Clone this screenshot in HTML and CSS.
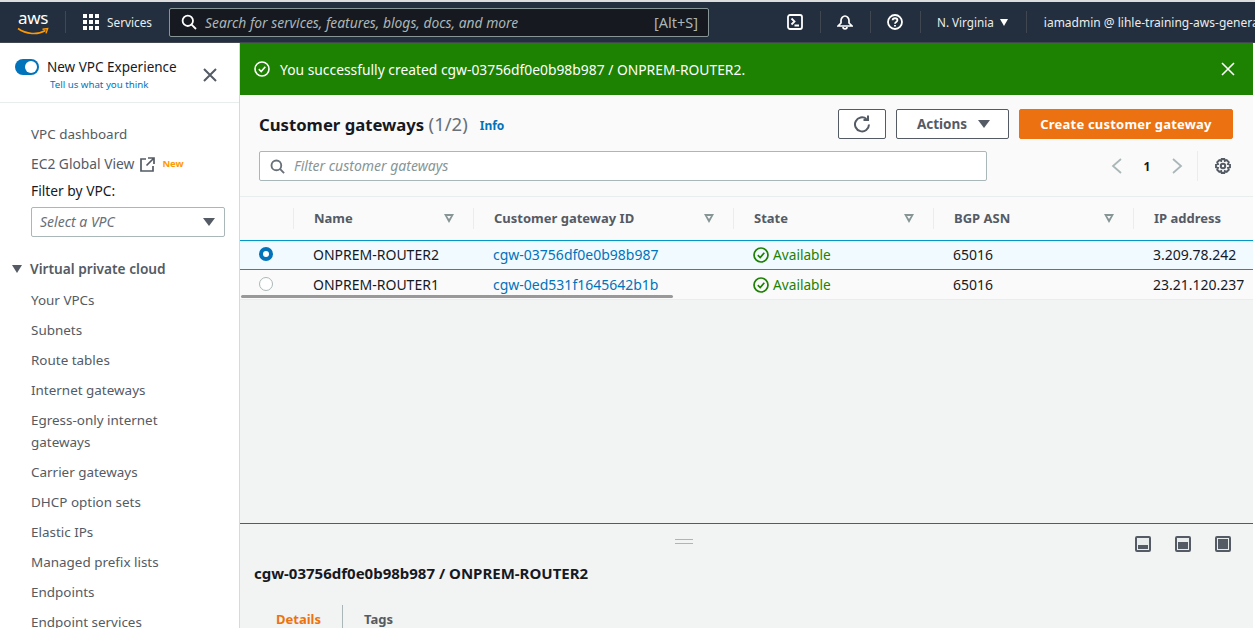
FILE: index.html
```html
<!DOCTYPE html>
<html lang="en">
<head>
    <meta charset="UTF-8">
    <title>Customer gateways | VPC Console</title>
    <link rel="stylesheet" href="styles.css">
</head>
<body>

    <header class="topbar">
        <div class="logo">
            <span class="logo-text">aws</span>
            <svg class="logo-smile" width="32" height="9" viewBox="0 0 32 9"><path d="M1 1.500C9 7.500 21 8 28.500 3.500" fill="none" stroke="#f90" stroke-width="1.600"/><path d="M25.500 2.200L30.600 1.600 29 6.400" fill="none" stroke="#f90" stroke-width="1.400"/></svg>
        </div>
        <span class="top-sep sep-logo"></span>
        <svg class="grid-icon" width="16" height="16" viewBox="0 0 16 16" fill="#fff"><rect width="4" height="4"/><rect x="6" width="4" height="4"/><rect x="12" width="4" height="4"/><rect y="6" width="4" height="4"/><rect x="6" y="6" width="4" height="4"/><rect x="12" y="6" width="4" height="4"/><rect y="12" width="4" height="4"/><rect x="6" y="12" width="4" height="4"/><rect x="12" y="12" width="4" height="4"/></svg>
        <span class="services">Services</span>
        <div class="search">
            <svg width="16" height="16" viewBox="0 0 16 16" fill="none" stroke="#fff" stroke-width="1.800"><circle cx="6.800" cy="6.800" r="5.200"/><path d="M10.600 10.600L15 15"/></svg>
            <span class="search-text">Search for services, features, blogs, docs, and more</span>
            <span class="search-key">[Alt+S]</span>
        </div>
        <svg class="top-icon icon-shell" width="16" height="16" viewBox="0 0 16 16" fill="none" stroke="#fff" stroke-width="1.800"><rect x="1" y="1" width="14" height="14" rx="2"/><path d="M4.500 4.500L7.500 7.500 4.500 10.500M7.500 11.500H12"/></svg>
        <span class="top-sep"></span>
        <svg class="top-icon" width="16" height="16" viewBox="0 0 16 16" fill="none" stroke="#fff" stroke-width="1.700"><path d="M1 12L4 9V6.500C4 4 6 2 8 2S12 4 12 6.500V9L15 12Z"/><path d="M6 13C6 15.500 10 15.500 10 13"/></svg>
        <span class="top-sep"></span>
        <svg class="top-icon" width="16" height="16" viewBox="0 0 16 16" fill="none" stroke="#fff" stroke-width="1.800"><circle cx="8" cy="8" r="7"/><path d="M5.600 6.200C5.800 3.600 10.400 3.600 10.400 6.200 10.400 8 8 7.800 8 9.800"/><path d="M8 11V12.600"/></svg>
        <span class="top-sep"></span>
        <span class="region">N. Virginia</span>
        <span class="caret caret-white"></span>
        <span class="top-sep"></span>
        <span class="account">iamadmin @ lihle-training-aws-general</span>
    </header>

    <div class="layout">
        <nav class="sidebar">
            <div class="side-head">
                <div class="toggle-row">
                    <span class="toggle"></span>
                    <span class="toggle-label">New VPC Experience</span>
                </div>
                <a class="feedback">Tell us what you think</a>
                <svg class="side-close" width="14" height="14" viewBox="0 0 14 14" stroke="#545b64" stroke-width="2"><path d="M1 1L13 13M13 1L1 13"/></svg>
            </div>
            <div class="side-body">
                <a class="nav-link first-link">VPC dashboard</a>
                <div class="nav-link ec2-row">
                    <span>EC2 Global View</span>
                    <svg width="15" height="15" viewBox="0 0 15 15" fill="none" stroke="#545b64" stroke-width="1.700"><path d="M6 2H1V14H13V9"/><path d="M8 1H14V7M14 1L6.500 8.500"/></svg>
                    <span class="new-tag">New</span>
                </div>
                <label class="filter-label">Filter by VPC:</label>
                <div class="vpc-select">
                    <span>Select a VPC</span>
                    <span class="caret caret-dark"></span>
                </div>
                <div class="nav-group"><span class="caret caret-dark"></span>Virtual private cloud</div>
                <a class="nav-link">Your VPCs</a>
                <a class="nav-link">Subnets</a>
                <a class="nav-link">Route tables</a>
                <a class="nav-link">Internet gateways</a>
                <a class="nav-link nav-wrap">Egress-only internet gateways</a>
                <a class="nav-link">Carrier gateways</a>
                <a class="nav-link">DHCP option sets</a>
                <a class="nav-link">Elastic IPs</a>
                <a class="nav-link">Managed prefix lists</a>
                <a class="nav-link">Endpoints</a>
                <a class="nav-link">Endpoint services</a>
            </div>
        </nav>

        <main class="content">
            <div class="flash">
                <svg width="16" height="16" viewBox="0 0 16 16" fill="none" stroke="#fff" stroke-width="1.600"><circle cx="8" cy="8" r="7"/><path d="M4.800 8.200L7.200 10.500 11.300 5.800"/></svg>
                <span class="flash-text">You successfully created cgw-03756df0e0b98b987 / ONPREM-ROUTER2.</span>
                <svg class="flash-close" width="14" height="14" viewBox="0 0 14 14" stroke="#fff" stroke-width="1.600"><path d="M1 1L13 13M13 1L1 13"/></svg>
            </div>

            <section class="panel">
                <div class="panel-head">
                    <h1>Customer gateways <span class="count">(1/2)</span></h1>
                    <a class="info">Info</a>
                    <div class="actions">
                        <button class="btn btn-refresh">
                            <svg width="18" height="18" viewBox="0 0 18 18" fill="none" stroke="#545b64" stroke-width="2"><path d="M16 9.500A7 7 0 1 1 13.500 4"/><path d="M15 0.500V5H10.500"/></svg>
                        </button>
                        <button class="btn btn-actions">Actions <span class="caret caret-dark"></span></button>
                        <button class="btn btn-primary">Create customer gateway</button>
                    </div>
                </div>
                <div class="filter-row">
                    <div class="filter-box">
                        <svg width="15" height="15" viewBox="0 0 16 16" fill="none" stroke="#687078" stroke-width="2"><circle cx="6.800" cy="6.800" r="5.200"/><path d="M10.600 10.600L15 15"/></svg>
                        <span>Filter customer gateways</span>
                    </div>
                    <div class="pager">
                        <svg width="12" height="16" viewBox="0 0 12 16" fill="none" stroke="#aab7b8" stroke-width="1.800"><path d="M10 1L2 8 10 15"/></svg>
                        <span class="page-num">1</span>
                        <svg width="12" height="16" viewBox="0 0 12 16" fill="none" stroke="#aab7b8" stroke-width="1.800"><path d="M2 1L10 8 2 15"/></svg>
                    </div>
                    <span class="pager-sep"></span>
                    <svg class="gear" width="16" height="16" viewBox="0 0 16 16" fill="none" stroke="#545b64" stroke-width="2"><circle cx="8" cy="8" r="2.200"/><path d="M6.700 1H9.300L9.800 3 11.700 2.200 13.800 4.300 13 6.200 15 6.700V9.300L13 9.800 13.800 11.700 11.700 13.800 9.800 13 9.300 15H6.700L6.200 13 4.300 13.800 2.200 11.700 3 9.800 1 9.300V6.700L3 6.200 2.200 4.300 4.300 2.200 6.200 3Z" stroke-width="1.900"/></svg>
                </div>

                <div class="table">
                    <div class="thead">
                        <div class="th th-select"></div>
                        <div class="th">Name<span class="sort"></span></div>
                        <div class="th">Customer gateway ID<span class="sort"></span></div>
                        <div class="th">State<span class="sort"></span></div>
                        <div class="th">BGP ASN<span class="sort"></span></div>
                        <div class="th">IP address</div>
                    </div>
                    <div class="row row-selected">
                        <div class="td td-select"><span class="radio radio-on"></span></div>
                        <div class="td">ONPREM-ROUTER2</div>
                        <div class="td"><a class="link">cgw-03756df0e0b98b987</a></div>
                        <div class="td state">
                            <svg width="16" height="16" viewBox="0 0 16 16" fill="none" stroke="#1d8102" stroke-width="1.700"><circle cx="8" cy="8" r="7"/><path d="M4.800 8.200L7.200 10.500 11.300 5.800"/></svg>
                            Available
                        </div>
                        <div class="td">65016</div>
                        <div class="td">3.209.78.242</div>
                    </div>
                    <div class="row">
                        <div class="td td-select"><span class="radio"></span></div>
                        <div class="td">ONPREM-ROUTER1</div>
                        <div class="td"><a class="link">cgw-0ed531f1645642b1b</a></div>
                        <div class="td state">
                            <svg width="16" height="16" viewBox="0 0 16 16" fill="none" stroke="#1d8102" stroke-width="1.700"><circle cx="8" cy="8" r="7"/><path d="M4.800 8.200L7.200 10.500 11.300 5.800"/></svg>
                            Available
                        </div>
                        <div class="td">65016</div>
                        <div class="td">23.21.120.237</div>
                    </div>
                    <span class="scrollbar"></span>
                </div>
            </section>

            <div class="spacer"></div>

            <section class="split">
                <div class="split-top">
                    <span class="handle"></span>
                    <div class="split-icons">
                        <span class="pane-icon pane-low"><i></i></span>
                        <span class="pane-icon pane-mid"><i></i></span>
                        <span class="pane-icon pane-full"><i></i></span>
                    </div>
                </div>
                <h2>cgw-03756df0e0b98b987 / ONPREM-ROUTER2</h2>
                <div class="tabs">
                    <span class="tab tab-active">Details</span>
                    <span class="tab">Tags</span>
                </div>
            </section>
        </main>
    </div>

</body>
</html>
```

FILE: styles.css
```css
* {
    box-sizing: border-box;
}
html, body {
    margin: 0;
    height: 628px;
    overflow: hidden;
}
body {
    font-family: "Noto Sans", sans-serif;
    font-size: 14px;
    color: #16191f;
    padding-top: 2px;
    background-color: #ddd;
}

/* top bar */
.topbar {
    height: 41px;
    background: #232f3e;
    color: #eaeded;
    display: flex;
    align-items: center;
    white-space: nowrap;
    overflow: hidden;
    border-bottom: 1px solid #414750;
}
.logo {
    width: 32px;
    margin-left: 17px;
    position: relative;
    height: 28px;
    flex: none;
}
.logo-text {
    display: block;
    font-size: 17px;
    line-height: 20px;
    color: #fff;
    text-align: center;
    letter-spacing: -0.3px;
}
.logo-smile {
    position: absolute;
    left: 0;
    top: 19px;
}
.top-sep {
    width: 1px;
    height: 22px;
    background: #414750;
    flex: none;
}
.sep-logo {
    margin-left: 16px;
}
.grid-icon {
    margin-left: 17px;
    flex: none;
}
.services {
    margin-left: 8px;
    font-size: 11.800px;
}
.search {
    margin-left: 17px;
    width: 540px;
    height: 29px;
    background: #16191f;
    border: 1px solid #879596;
    border-radius: 2px;
    display: flex;
    align-items: center;
    padding: 0 10px 0 11px;
    flex: none;
}
.search-text {
    margin-left: 8px;
    font-style: italic;
    color: #aab7b8;
    font-size: 13.850px;
    flex: 1;
}
.search-key {
    color: #aab7b8;
    font-size: 14.500px;
}
.top-icon {
    flex: none;
    margin: 0 17px 0 16px;
}
.icon-shell {
    margin-left: 78px;
    margin-right: 17px;
}
.region {
    margin-left: 16px;
    margin-right: 6px;
    font-size: 11.700px;
}
.account {
    margin-left: 17px;
    font-size: 12px;
}
.caret {
    display: inline-block;
    width: 0;
    height: 0;
    border-left: 5px solid transparent;
    border-right: 5px solid transparent;
    border-top: 8px solid #fff;
    flex: none;
}
.caret-white {
    margin-right: 18px;
    border-left-width: 4.500px;
    border-right-width: 4.500px;
    border-top-width: 7px;
}
.caret-dark {
    border-top-color: #545b64;
    border-left-width: 6px;
    border-right-width: 6px;
}

.layout {
    display: flex;
    height: 585px;
    background: #fff;
    padding-right: 2px;
}

/* left nav */
.sidebar {
    width: 240px;
    flex: none;
    background: #fff;
    border-right: 1px solid #d5dbdb;
    overflow: hidden;
}
.side-head {
    height: 60px;
    padding: 15px 0 0 15px;
    border-bottom: 1px solid #eaeded;
    position: relative;
}
.toggle-row {
    display: flex;
    align-items: center;
    height: 18px;
}
.toggle {
    width: 24px;
    height: 16px;
    border-radius: 8px;
    background: #0073bb;
    position: relative;
    flex: none;
}
.toggle::after {
    content: "";
    position: absolute;
    right: 2px;
    top: 2px;
    width: 12px;
    height: 12px;
    border-radius: 50%;
    background: #fff;
}
.toggle-label {
    margin-left: 8px;
    font-size: 13.500px;
}
.feedback {
    display: block;
    margin: 2px 0 0 35px;
    font-size: 9.700px;
    color: #0073bb;
}
.side-close {
    position: absolute;
    left: 203px;
    top: 25px;
}
.side-body {
    padding: 17px 14px 0 31px;
}
.nav-link {
    display: block;
    color: #545b64;
    font-size: 13.450px;
    line-height: 18px;
    margin-bottom: 12px;
}
.first-link {
    margin-top: 5px;
}
.ec2-row {
    display: flex;
    align-items: center;
    font-size: 13.800px;
    margin-bottom: 9px;
}
.ec2-row svg {
    margin-left: 6px;
}
.new-tag {
    margin-left: 7px;
    font-size: 9.500px;
    font-weight: 700;
    color: #ff9900;
}
.filter-label {
    display: block;
    font-size: 13.800px;
    line-height: 18px;
    margin-bottom: 7px;
}
.vpc-select {
    height: 30px;
    width: 194px;
    border: 1px solid #aab7b8;
    border-radius: 2px;
    display: flex;
    align-items: center;
    justify-content: space-between;
    padding: 0 9px 0 8px;
    font-style: italic;
    color: #687078;
}
.vpc-select span:first-child {
    margin-bottom: 1px;
}
.nav-group {
    margin: 23px 0 13px -19px;
    display: flex;
    align-items: center;
    font-size: 13.700px;
    font-weight: 600;
    color: #545b64;
    line-height: 18px;
}
.nav-group .caret {
    margin-right: 8px;
    border-left-width: 5px;
    border-right-width: 5px;
}
.nav-wrap {
    line-height: 22px;
    margin-top: -2px;
    margin-bottom: 10px;
    max-width: 150px;
}

/* main column */
.content {
    flex: 1;
    min-width: 0;
    background: #f2f3f3;
    display: flex;
    flex-direction: column;
    overflow: hidden;
}
.flash {
    height: 52px;
    flex: none;
    background: #1d8102;
    color: #fff;
    display: flex;
    align-items: center;
    padding: 0 18px 0 14px;
}
.flash-text {
    margin-left: 10px;
    flex: 1;
    font-size: 13.850px;
}
.panel {
    flex: none;
    background: #fafafa;
}
.panel-head {
    display: flex;
    align-items: center;
    padding: 14px 20px 0 19px;
    height: 44px;
}
h1 {
    margin: 0;
    font-size: 16.700px;
    font-weight: 700;
    line-height: 30px;
}
.count {
    font-size: 18.500px;
    font-weight: 400;
    color: #687078;
}
.info {
    margin: 3px 0 0 12px;
    font-size: 12px;
    font-weight: 700;
    color: #0073bb;
}
.actions {
    margin-left: auto;
    display: flex;
    gap: 10px;
}
.btn {
    height: 30px;
    border-radius: 2px;
    border: 1px solid #545b64;
    background: #fff;
    font-family: inherit;
    font-size: 13.500px;
    font-weight: 700;
    color: #545b64;
    display: flex;
    align-items: center;
    justify-content: center;
}
.btn-refresh {
    width: 48px;
}
.btn-actions {
    width: 113px;
    gap: 11px;
    padding-left: 8px;
}
.btn-primary {
    width: 214px;
    background: #ec7211;
    border-color: #ec7211;
    color: #fff;
    font-size: 13px;
    letter-spacing: 0.2px;
}
.filter-row {
    display: flex;
    align-items: center;
    padding: 12px 0 0 19px;
    height: 42px;
}
.filter-box {
    width: 728px;
    height: 30px;
    background: #fff;
    border: 1px solid #aab7b8;
    border-radius: 2px;
    display: flex;
    align-items: center;
    padding-left: 10px;
    font-style: italic;
    color: #879596;
}
.filter-box span {
    margin-left: 9px;
    margin-bottom: 1px;
}
.pager {
    margin-left: 124px;
    display: flex;
    align-items: center;
}
.page-num {
    width: 48px;
    text-align: center;
    font-size: 12px;
    font-weight: 700;
}
.pager-sep {
    width: 1px;
    height: 30px;
    margin-left: 14px;
    background: #eaeded;
}
.gear {
    margin-left: 17px;
}
.table {
    margin-top: 15px;
    border-top: 1px solid #eaeded;
    border-bottom: 1px solid #eaeded;
    position: relative;
}
.thead, .row {
    display: grid;
    grid-template-columns: 53px 180px 260px 200px 200px 120px;
    white-space: nowrap;
}
.thead {
    height: 43px;
    align-items: center;
}
.th {
    height: 21px;
    line-height: 21px;
    padding-left: 20px;
    padding-right: 18px;
    font-size: 13px;
    font-weight: 700;
    color: #545b64;
    border-left: 1px solid #eaeded;
    position: relative;
}
.th-select {
    border-left: none;
}
.sort {
    position: absolute;
    right: 19px;
    top: 6px;
    width: 0;
    height: 0;
    border-left: 5.500px solid transparent;
    border-right: 5.500px solid transparent;
    border-top: 9px solid #879596;
}
.sort::after {
    content: "";
    position: absolute;
    left: -2px;
    top: -7px;
    width: 0;
    height: 0;
    border-left: 2px solid transparent;
    border-right: 2px solid transparent;
    border-top: 3px solid #fafafa;
}
.row {
    height: 29px;
    align-items: center;
}
.row-selected {
    height: 30px;
    padding-bottom: 1px;
    background: #f1faff;
    border-top: 1px solid #0099c7;
    border-bottom: 1px solid #0099c7;
}
.td {
    padding-left: 20px;
    display: flex;
    align-items: center;
}
.td-select {
    padding-left: 19px;
}
.link {
    color: #0073bb;
}
.state {
    color: #1d8102;
    font-size: 13.700px;
    gap: 4px;
}
.radio {
    width: 14px;
    height: 14px;
    border-radius: 50%;
    background: #fff;
    border: 1px solid #aab7b8;
    margin-top: -2px;
}
.radio-on {
    border: 4px solid #0073bb;
}
.scrollbar {
    position: absolute;
    left: 1px;
    bottom: 1px;
    width: 432px;
    height: 3px;
    background: #999;
    border-radius: 2px;
}
.spacer {
    flex: none;
    height: 223px;
}

/* split panel */
.split {
    flex: 1;
    border-top: 1px solid #545b64;
    padding: 0 14px;
    overflow: hidden;
}
.split-top {
    height: 29px;
    position: relative;
}
.handle {
    position: absolute;
    left: 421px;
    top: 15px;
    width: 18px;
    height: 5px;
    border-top: 1px solid #aab7b8;
    border-bottom: 1px solid #aab7b8;
}
.split-icons {
    position: absolute;
    right: 8px;
    top: 12px;
    display: flex;
    gap: 24px;
}
.pane-icon {
    width: 16px;
    height: 16px;
    border: 2px solid #545b64;
    border-radius: 2px;
    padding: 1px;
    background: #eaeded;
    display: flex;
    align-items: flex-end;
}
.pane-icon i {
    display: block;
    width: 100%;
    background: #545b64;
}
.pane-low i {
    height: 4px;
}
.pane-mid i {
    height: 7px;
}
.pane-full i {
    height: 10px;
}
h2 {
    margin: 10px 0 0;
    font-size: 15px;
    font-weight: 700;
    line-height: 20px;
}
.tabs {
    display: flex;
    margin-top: 22px;
    padding-left: 1px;
}
.tab {
    padding: 5px 21px;
    font-size: 13px;
    font-weight: 700;
    color: #545b64;
    line-height: 18px;
}
.tab-active {
    color: #ec7211;
    border-right: 1px solid #aab7b8;
}
```
